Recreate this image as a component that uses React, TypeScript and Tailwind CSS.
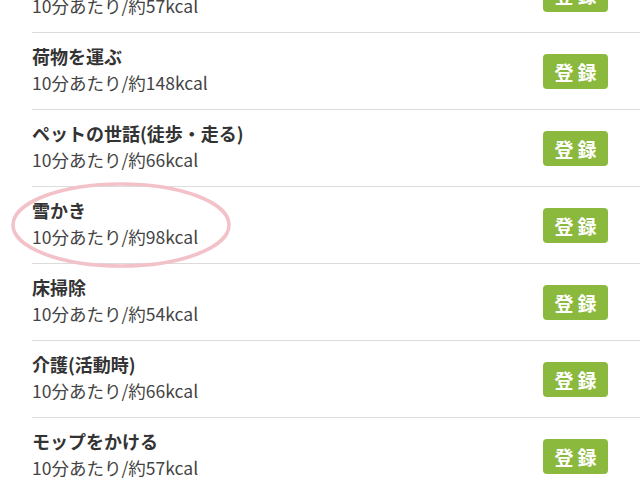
const items = [
  { name: "掃除機をかける", kcal: 57 },
  { name: "荷物を運ぶ", kcal: 148 },
  { name: "ペットの世話(徒歩・走る)", kcal: 66 },
  { name: "雪かき", kcal: 98 },
  { name: "床掃除", kcal: 54 },
  { name: "介護(活動時)", kcal: 66 },
  { name: "モップをかける", kcal: 57 },
]

function Row({ name, kcal }: { name: string; kcal: number }) {
  return (
    <div className="flex h-[77px] items-center border-b border-[#dcdcdc] ml-8 pr-8">
      <div className="flex-1 self-start pt-[10px]">
        <div className="text-[18px] leading-[26px] font-semibold text-[#333]">{name}</div>
        <div className="text-[17.5px] leading-[27px] text-[#444]">10分あたり/約{kcal}kcal</div>
      </div>
      <button className="h-[35px] w-[65px] rounded-[4px] bg-[#8bb93e] text-white text-[19px] font-bold tracking-[4px] pl-[4px] leading-none">
        登録
      </button>
    </div>
  )
}

export default function App() {
  return (
    <div
      className="relative h-[480px] w-[640px] overflow-hidden bg-white"
      style={{ fontFamily: '"Noto Sans CJK JP", "Noto Sans", sans-serif' }}
    >
      <div className="-mt-[44px]">
        {items.map((it, i) => (
          <Row key={i} name={it.name} kcal={it.kcal} />
        ))}
      </div>
      <svg className="absolute left-[10px] top-[181px]" width="222" height="88" viewBox="0 0 222 88">
        <ellipse cx="111" cy="44" rx="108" ry="41" fill="none" stroke="#f3c2c9" strokeWidth="3.5" />
      </svg>
    </div>
  )
}
